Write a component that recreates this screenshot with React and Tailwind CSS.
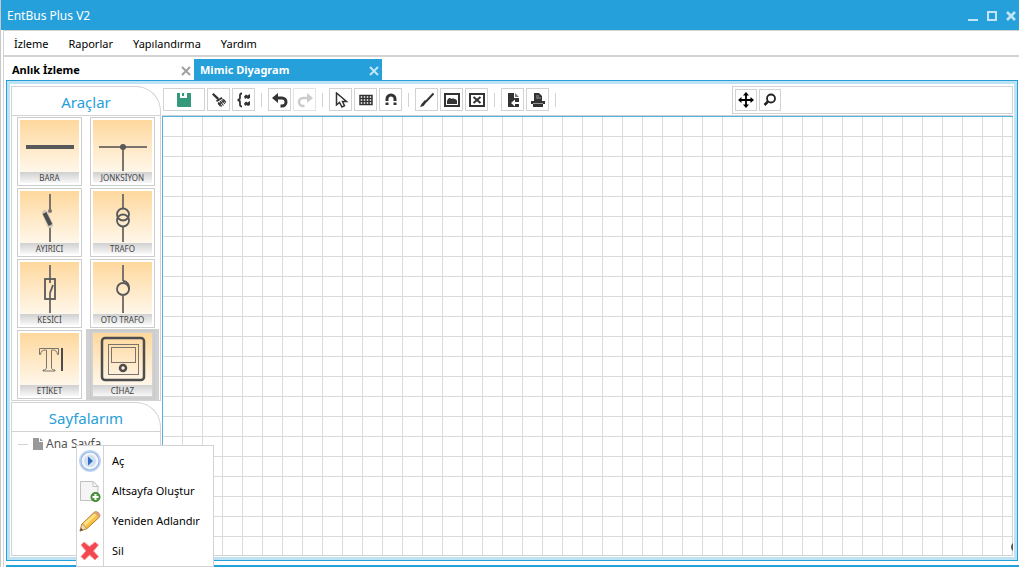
import { useState } from 'react';

const menus = ['İzleme', 'Raporlar', 'Yapılandırma', 'Yardım'];

const symbols = {
  bara: <path d="M6 27h48" strokeWidth="4" stroke="#58595b" />,
  jonksiyon: (
    <>
      <path d="M6 27h48M30 27v24" strokeWidth="2" />
      <circle cx="30" cy="27" r="3" fill="#58595b" stroke="none" />
    </>
  ),
  ayirici: (
    <>
      <path d="M30 3v17M30 36v15" strokeWidth="2" />
      <circle cx="30" cy="20" r="2" fill="#7a746c" stroke="none" />
      <path d="M25 22l5 12" strokeWidth="6" stroke="#cfc6b8" strokeLinecap="round" />
      <path d="M24.500 22l6 12" strokeWidth="4" stroke="#4d4d4f" />
    </>
  ),
  trafo: (
    <>
      <path d="M30 3v14M30 36v15" strokeWidth="2" />
      <circle cx="30" cy="23.500" r="6" stroke="#58595b" strokeWidth="1.800" />
      <circle cx="30" cy="29.500" r="6" stroke="#58595b" strokeWidth="1.800" />
    </>
  ),
  kesici: (
    <>
      <path d="M30 3v18M30 31v20" strokeWidth="2" />
      <rect x="25" y="17" width="10" height="20" stroke="#58595b" strokeWidth="1.800" />
      <path d="M33 23l-3 8" stroke="#58595b" strokeWidth="1.800" />
    </>
  ),
  ototrafo: (
    <>
      <path d="M30 3v16M30 34v17" strokeWidth="2" />
      <circle cx="30" cy="27" r="6" stroke="#58595b" strokeWidth="1.800" />
      <path d="M30 19c4 0 7 4 6 9" stroke="#58595b" strokeWidth="1.800" />
    </>
  ),
  etiket: (
    <>
      <path d="M19.500 15.500h19v6h-1c-.5-3-1.500-4.500-5-4.500h-1v17c0 2.500 1 3 3.500 3v1h-12v-1c2.500 0 3.500-.5 3.500-3V17h-1c-3.500 0-4.500 1.500-5 4.500h-1z" strokeWidth="1" />
      <path d="M42 15v23" strokeWidth="2" stroke="#4d4d4f" />
    </>
  ),
  cihaz: (
    <>
      <rect x="9" y="5" width="42" height="42" rx="3" stroke="#4d4d4f" strokeWidth="2.500" />
      <rect x="15.500" y="11.500" width="30" height="30" strokeWidth="1" />
      <rect x="18.500" y="14.500" width="24" height="15" strokeWidth="1" />
      <circle cx="30" cy="35" r="3" stroke="#4d4d4f" strokeWidth="2.500" />
    </>
  ),
};

const tools = [
  { id: 'bara', label: 'BARA' },
  { id: 'jonksiyon', label: 'JONKSİYON' },
  { id: 'ayirici', label: 'AYIRICI' },
  { id: 'trafo', label: 'TRAFO' },
  { id: 'kesici', label: 'KESİCİ' },
  { id: 'ototrafo', label: 'OTO TRAFO' },
  { id: 'etiket', label: 'ETİKET' },
  { id: 'cihaz', label: 'CİHAZ' },
];

const icons = {
  save: (
    <>
      <path d="M1 1h14v14H2l-1-1z" fill="#33997a" />
      <path d="M4 1h7v5H4z" fill="#fff" />
      <path d="M6 1h2v3H6z" fill="#33997a" />
    </>
  ),
  brush: (
    <>
      <path d="M1 2.500L2.500 1 8 6 6.500 8z" fill="#333" />
      <path d="M5 8.500L10.500 5l1 1.500L6 10z" fill="#333" />
      <path d="M7.500 10l3.500 4.500M9 9l3.500 4.500M10.500 8l3.500 4M11.500 7l3.500 3.500M7 11l2.500 3.500" stroke="#333" strokeWidth="1.100" />
      <path d="M7.500 12.500l6.500-4.500" stroke="#333" strokeWidth="1.200" />
    </>
  ),
  group: (
    <>
      <path d="M6 1.500C3.500 1.500 4 3.500 4 5.500S3 8 1.500 8C3 8 4 8.500 4 10.500s-.5 4 2 4" fill="none" stroke="#333" strokeWidth="1.800" />
      <path d="M8 4.500l2-2 1.500 1L14 2v4l-2 1-1.500-1L9 7zM8 11.500l2-2 1.500 1L14 9v4l-2 1-1.500-1L9 14z" fill="#333" />
    </>
  ),
  undo: (
    <>
      <path d="M5 6h5a4 4 0 010 8H8.500" fill="none" stroke="#333" strokeWidth="3" />
      <path d="M0 6l6-5v10z" fill="#333" />
    </>
  ),
  redo: (
    <>
      <path d="M11 6H6a4 4 0 000 8h1.500" fill="none" stroke="#ccc" strokeWidth="2.600" />
      <path d="M16 6l-6-5v10z" fill="#ccc" />
    </>
  ),
  pointer: <path d="M3.500 1v12l3-2.500 2.500 4.500 2.500-1.300-2-4.200h4z" fill="#fff" stroke="#333" strokeWidth="1.500" />,
  grid: <path d="M2 3.500h12v9H2zM2 6.500h12M2 9.500h12M5 3.500v9M8 3.500v9M11 3.500v9" fill="none" stroke="#333" strokeWidth="1.500" />,
  magnet: (
    <>
      <path d="M4 9V7a4 4 0 018 0v2" fill="none" stroke="#333" strokeWidth="3" />
      <path d="M2.500 10.500h3V13h-3zM10.500 10.500h3V13h-3z" fill="#333" />
    </>
  ),
  pen: (
    <>
      <path d="M14.500 1.500L7 9.500" stroke="#333" strokeWidth="2" />
      <path d="M8 9.500L4.500 14 1 15l1.500-3L6 8z" fill="#333" />
    </>
  ),
  image: (
    <>
      <path d="M1 2h14v12H1z" fill="#fff" stroke="#333" strokeWidth="2" />
      <path d="M3 9c1-3 3-4 4.500-2 2-1 4 0 5.500 1.500V12H3z" fill="#333" />
    </>
  ),
  clear: (
    <>
      <path d="M1 2h14v12H1z" fill="#fff" stroke="#333" strokeWidth="2" />
      <path d="M4.500 5l7 6M11.500 5l-7 6" stroke="#333" strokeWidth="2" />
    </>
  ),
  importFile: (
    <>
      <path d="M3 1h6v5h5v9H3z" fill="#333" />
      <path d="M10 1l4 4h-4z" fill="#777" />
      <path d="M6 11l4-3.500v2.500h5v2h-5v2.500z" fill="#fff" />
    </>
  ),
  print: (
    <>
      <path d="M4 1h5l3 3v5H4z" fill="#333" />
      <path d="M6 4h3M6 6h5" stroke="#999" />
      <path d="M1 9h14v3H1z" fill="#333" />
      <path d="M3 12h10v3H3z" fill="#333" />
      <path d="M3 11.500h10" stroke="#999" />
    </>
  ),
  move: (
    <>
      <path d="M8 2v12M2 8h12" stroke="#000" strokeWidth="1.800" />
      <path d="M8 0l3 3.500H5zM8 16l3-3.500H5zM0 8l3.500-3v6zM16 8l-3.500-3v6z" fill="#000" />
    </>
  ),
  search: (
    <>
      <circle cx="9" cy="6.500" r="4" fill="none" stroke="#222" strokeWidth="1.800" />
      <path d="M6 9.500L2.500 13" stroke="#222" strokeWidth="2.500" />
    </>
  ),
};

const toolbar = [
  [
    { id: 'save', label: 'Kaydet', wide: true },
    { id: 'brush', label: 'Temizle' },
    { id: 'group', label: 'Grupla' },
  ],
  [
    { id: 'undo', label: 'Geri al' },
    { id: 'redo', label: 'Yinele', disabled: true },
  ],
  [
    { id: 'pointer', label: 'Seç' },
    { id: 'grid', label: 'Izgara' },
    { id: 'magnet', label: 'Yapıştır' },
  ],
  [
    { id: 'pen', label: 'Çiz' },
    { id: 'image', label: 'Arka plan' },
    { id: 'clear', label: 'Arka planı kaldır' },
  ],
  [
    { id: 'importFile', label: 'İçe aktar' },
    { id: 'print', label: 'Yazdır' },
  ],
];

const contextIcons = {
  open: (
    <>
      <circle cx="11" cy="11" r="11" fill="#c3d7f2" />
      <circle cx="11" cy="11" r="9.500" fill="#8fb3e2" />
      <circle cx="11" cy="11" r="8.500" fill="#f1f4f9" />
      <circle cx="11" cy="11" r="6" fill="#d0dff2" />
      <path d="M9 6.500l5 4.500-5 4.500z" fill="#2f6fc0" />
    </>
  ),
  add: (
    <>
      <path d="M1.500 1.500H14l5 5v14H1.500z" fill="#f5f5f5" stroke="#c0c0c0" />
      <path d="M14 1.500v5h5z" fill="#fff" stroke="#c0c0c0" />
      <circle cx="16.500" cy="17" r="4.500" fill="#4c9a3c" stroke="#35782a" />
      <path d="M16.500 14v6M13.500 17h6" stroke="#fff" strokeWidth="2" />
    </>
  ),
  rename: (
    <>
      <path d="M1 21l2-7L15 2.500c1-1 2.500-1 4 0s2.500 3 1.500 4.500L8 18.500z" fill="#f6c344" stroke="#b07a25" />
      <path d="M4 13.500L16 3l2 1.500L6 16z" fill="#ffe08a" />
      <path d="M1 21l2-7 2 .5.500 2 2.500 2z" fill="#f3d9b0" stroke="#b07a25" strokeWidth=".6" />
      <path d="M1 21l1-3 2 2z" fill="#444" />
      <path d="M14 3.500l2-1.500c3-.5 5 2 5 4.500L19 8.500c0-2.500-2-5-5-5z" fill="#dca07a" />
    </>
  ),
  remove: (
    <path d="M2 5l3-3 5.500 4.500L16 2l3.500 3-5 6 5 5.500-3.500 3.500-5.500-5-5 5L2 16.500 7 11z" fill="#f2474e" stroke="#f7999d" strokeLinejoin="round" />
  ),
};

const contextMenu = [
  { id: 'open', label: 'Aç' },
  { id: 'add', label: 'Altsayfa Oluştur' },
  { id: 'rename', label: 'Yeniden Adlandır' },
  { id: 'remove', label: 'Sil' },
];

function Icon({ id }) {
  return <svg viewBox="0 0 16 16" className="w-4 h-4">{icons[id]}</svg>;
}

function PanelTitle({ children }) {
  return (
    <h2 className="h-[29px] shrink-0 border border-b-0 border-[#d3d3d3] rounded-tr-[25px] text-center text-[15px] leading-[30px] text-[#26a0da]">
      {children}
    </h2>
  );
}

function TabClose({ label, className }) {
  return (
    <button aria-label={label} className={className}>
      <svg viewBox="0 0 10 10" className="w-2.5 h-2.5">
        <path d="M1 1l8 8M9 1L1 9" stroke="currentColor" strokeWidth="2" />
      </svg>
    </button>
  );
}

export default function App() {
  const [selected, setSelected] = useState('cihaz');

  return (
    <div className="h-screen flex flex-col overflow-hidden bg-white border-l border-[#c8c8c8] font-['Noto_Sans','Open_Sans',sans-serif] text-black">
      <header className="h-[30px] shrink-0 flex items-center justify-between bg-[#26a0da] pt-0.5 pl-1.5 pr-0.5 text-white">
        <h1 className="text-xs">EntBus Plus V2</h1>
        <div className="flex items-center gap-[7px] text-[#c3e5f6]">
          <button aria-label="Simge durumuna küçült">
            <svg viewBox="0 0 12 12" className="w-3 h-3"><path d="M1 10h10" stroke="currentColor" strokeWidth="2" /></svg>
          </button>
          <button aria-label="Ekranı kapla">
            <svg viewBox="0 0 12 12" className="w-3 h-3"><path d="M2 2h8v8H2z" fill="none" stroke="currentColor" strokeWidth="2" /></svg>
          </button>
          <button aria-label="Kapat">
            <svg viewBox="0 0 12 12" className="w-3 h-3"><path d="M2 2l8 8M10 2l-8 8" stroke="currentColor" strokeWidth="2.500" /></svg>
          </button>
        </div>
      </header>

      <div className="flex-1 min-h-0 flex flex-col ml-0.5 border-l border-t border-[#d3d3d3]">
        <nav className="h-[26px] shrink-0 flex items-center gap-5 pt-0.5 pl-2.5 border-b-2 border-[#d3d3d3] text-[11px]">
          {menus.map((m) => (
            <button key={m}>{m}</button>
          ))}
        </nav>

        {/* Tabs */}
        <div className="h-[23px] shrink-0 flex items-end text-[11px] font-bold">
          <div className="w-[190px] h-[21px] flex items-center justify-between pt-0.5 pl-2 pr-[3px]">
            <button>Anlık İzleme</button>
            <TabClose label="Anlık İzleme sekmesini kapat" className="text-[#a0a0a0]" />
          </div>
          <div className="w-[188px] h-[21px] flex items-center justify-between pt-0.5 pl-1.5 pr-[3px] bg-[#26a0da] text-white">
            <button>Mimic Diyagram</button>
            <TabClose label="Mimic Diyagram sekmesini kapat" className="text-[#c3e5f6]" />
          </div>
        </div>

        <div className="flex-1 min-h-0 ml-0.5 mr-px mb-1 border border-[#26a0da]">
          <div className="h-full flex gap-px border-[3px] border-[#bde3f5] p-px pt-0.5">
            {/* Sidebar */}
            <aside className="w-[150px] shrink-0 flex flex-col gap-px">
              <section>
                <PanelTitle>Araçlar</PanelTitle>
                <div className="grid grid-cols-2 border border-[#d3d3d3] px-px">
                  {tools.map((t) => (
                    <button
                      key={t.id}
                      onClick={() => setSelected(t.id)}
                      className={`h-[71px] px-1 py-px ${selected === t.id ? 'bg-[#d1d1d1]' : ''}`}
                    >
                      <span className={`h-full flex flex-col border p-0.5 ${selected === t.id ? 'border-[#c8c8c8]' : 'border-[#cdcdcd] bg-white'}`}>
                        <span className="flex-1 block bg-linear-to-b from-[#fed89c] to-[#fff7ea]">
                          <svg viewBox="0 0 59 52" className="w-full h-[52px]" fill="none" stroke="#7a746c">
                            {symbols[t.id]}
                          </svg>
                        </span>
                        <span className="h-[11px] bg-linear-to-b from-[#d0d0d0] to-[#f8f8f8] text-[8px] leading-[11px] text-center text-[#444] whitespace-nowrap">
                          {t.label}
                        </span>
                      </span>
                    </button>
                  ))}
                </div>
              </section>

              <section className="flex-1 min-h-0 flex flex-col">
                <PanelTitle>Sayfalarım</PanelTitle>
                <div className="flex-1 border border-[#d3d3d3] pl-1.5">
                  <div className="relative flex items-center h-6 text-xs text-[#555]">
                    <span className="w-2.5 border-t border-[#d3d3d3]" />
                    <svg viewBox="0 0 10 12" className="w-2.5 h-3 ml-[5px] mr-[3px]" fill="#999">
                      <path d="M0 0h6v4h4v8H0z" />
                      <path d="M7 0l3 3H7z" />
                    </svg>
                    <button>Ana Sayfa</button>

                    <ul className="absolute left-[58px] top-[13px] z-10 w-[138px] bg-white border border-[#d3d3d3] text-[11px] text-black">
                      {contextMenu.map((item) => (
                        <li key={item.id}>
                          <button className="w-full h-[30px] flex items-center text-left whitespace-nowrap">
                            <span className="w-[27px] h-full shrink-0 flex items-center justify-center border-r border-[#d3d3d3]">
                              <svg viewBox="0 0 22 22" className="w-[22px] h-[22px]" fill="none">{contextIcons[item.id]}</svg>
                            </span>
                            <span className="pl-2">{item.label}</span>
                          </button>
                        </li>
                      ))}
                    </ul>
                  </div>
                </div>
              </section>
            </aside>

            {/* Editor */}
            <main className="flex-1 min-w-0 flex flex-col">
              <div className="h-[30px] shrink-0 flex items-start justify-between pl-px border-b border-[#d3d3d3]">
                <div className="flex items-center gap-0.5 pt-0.5">
                  {toolbar.map((group, i) => (
                    <div key={i} className="flex items-center gap-0.5">
                      {group.map((b) => (
                        <button
                          key={b.id}
                          aria-label={b.label}
                          disabled={b.disabled}
                          className={`h-[23px] flex items-center justify-center border ${b.wide ? 'w-[42px]' : 'w-[23px]'} ${b.disabled ? 'border-[#e4e4e4]' : 'border-[#d3d3d3]'}`}
                        >
                          <Icon id={b.id} />
                        </button>
                      ))}
                      <span className="w-px h-3.5 mx-1 bg-[#d3d3d3]" />
                    </div>
                  ))}
                </div>
                <div className="w-[281px] h-7 flex items-center gap-0.5 pl-0.5 border border-[#d3d3d3]">
                  <button aria-label="Kaydır" className="w-[22px] h-[22px] flex items-center justify-center border border-[#d3d3d3]">
                    <Icon id="move" />
                  </button>
                  <button aria-label="Yakınlaştır" className="w-[22px] h-[22px] flex items-center justify-center border border-[#d3d3d3]">
                    <Icon id="search" />
                  </button>
                </div>
              </div>
              <div className="relative flex-1 overflow-hidden border-l border-t border-[#4fb2e0] bg-[linear-gradient(to_right,transparent_19px,#dadada_19px),linear-gradient(to_bottom,transparent_19px,#dadada_19px)] bg-size-[20px_20px]">
                <div className="h-full border-r border-b border-[#d3d3d3]" />
                <span className="absolute -right-2 bottom-1 w-2.5 h-2.5 rounded-full bg-[#555]" />
              </div>
            </main>
          </div>
        </div>
        <div className="h-0.5 shrink-0 ml-0.5 bg-[#26a0da]" />
      </div>
    </div>
  );
}
